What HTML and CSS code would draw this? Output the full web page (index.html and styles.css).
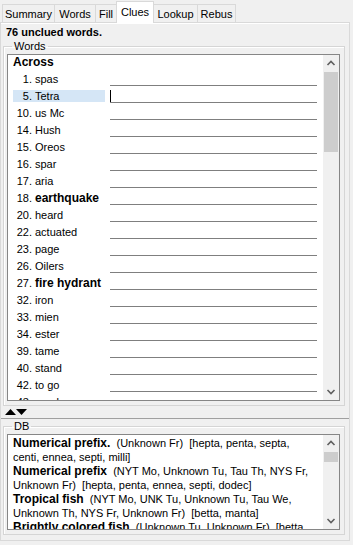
FILE: index.html
```html
<!DOCTYPE html>
<html lang="en">
<head>
  <meta charset="UTF-8">
  <meta name="viewport" content="width=device-width, initial-scale=1.0">
  <title>Clues</title>
  <link rel="stylesheet" href="styles.css">
</head>
<body>

  <!-- tab strip -->
  <div class="tabs">
    <div class="tab" style="width:53px">Summary</div>
    <div class="tab" style="width:42px">Words</div>
    <div class="tab" style="width:22px">Fill</div>
    <div class="tab active" style="width:38px">Clues</div>
    <div class="tab" style="width:45px">Lookup</div>
    <div class="tab" style="width:39px">Rebus</div>
  </div>

  <div class="panel">
    <div class="summary">76 unclued words.</div>

    <fieldset class="group">
      <legend>Words</legend>
      <div class="listbox words">
        <div class="list-body">
          <div class="heading">Across</div>
          <div class="row"><span class="label"><span class="num">1.</span>spas</span><span class="entry"></span></div>
          <div class="row"><span class="label selected"><span class="num">5.</span>Tetra</span><span class="entry focus"><span class="caret"></span></span></div>
          <div class="row"><span class="label"><span class="num">10.</span>us Mc</span><span class="entry"></span></div>
          <div class="row"><span class="label"><span class="num">14.</span>Hush</span><span class="entry"></span></div>
          <div class="row"><span class="label"><span class="num">15.</span>Oreos</span><span class="entry"></span></div>
          <div class="row"><span class="label"><span class="num">16.</span>spar</span><span class="entry"></span></div>
          <div class="row"><span class="label"><span class="num">17.</span>aria</span><span class="entry"></span></div>
          <div class="row"><span class="label long"><span class="num">18.</span>earthquake</span><span class="entry"></span></div>
          <div class="row"><span class="label"><span class="num">20.</span>heard</span><span class="entry"></span></div>
          <div class="row"><span class="label"><span class="num">22.</span>actuated</span><span class="entry"></span></div>
          <div class="row"><span class="label"><span class="num">23.</span>page</span><span class="entry"></span></div>
          <div class="row"><span class="label"><span class="num">26.</span>Oilers</span><span class="entry"></span></div>
          <div class="row"><span class="label long"><span class="num">27.</span>fire hydrant</span><span class="entry"></span></div>
          <div class="row"><span class="label"><span class="num">32.</span>iron</span><span class="entry"></span></div>
          <div class="row"><span class="label"><span class="num">33.</span>mien</span><span class="entry"></span></div>
          <div class="row"><span class="label"><span class="num">34.</span>ester</span><span class="entry"></span></div>
          <div class="row"><span class="label"><span class="num">39.</span>tame</span><span class="entry"></span></div>
          <div class="row"><span class="label"><span class="num">40.</span>stand</span><span class="entry"></span></div>
          <div class="row"><span class="label"><span class="num">42.</span>to go</span><span class="entry"></span></div>
          <div class="row"><span class="label"><span class="num">43.</span>snarl</span><span class="entry"></span></div>
        </div>
        <div class="scrollbar">
          <svg class="arrow" width="16" height="16" viewBox="0 0 16 16"><polyline points="4.5,10 8,6.5 11.5,10" fill="none" stroke="#606060" stroke-width="1.6"/></svg>
          <div class="track"><div class="thumb" style="height:80px"></div></div>
          <svg class="arrow" width="16" height="16" viewBox="0 0 16 16"><polyline points="4.5,6 8,9.5 11.5,6" fill="none" stroke="#606060" stroke-width="1.6"/></svg>
        </div>
      </div>
    </fieldset>

    <!-- splitter -->
    <div class="splitter">
      <svg width="24" height="7" viewBox="0 0 24 7">
        <polygon points="0,6 5.5,0 11,6" fill="#000"/>
        <polygon points="11,0 22,0 16.5,6" fill="#000"/>
      </svg>
    </div>

    <fieldset class="group db">
      <legend>DB</legend>
      <div class="listbox dbbox">
        <div class="db-text">
          <p><b>Numerical prefix.</b>&nbsp; (Unknown Fr)&nbsp; [hepta, penta, septa, centi, ennea, septi, milli]</p>
          <p><b>Numerical prefix</b>&nbsp; (NYT Mo, Unknown Tu, Tau Th, NYS Fr, Unknown Fr)&nbsp; [hepta, penta, ennea, septi, dodec]</p>
          <p><b>Tropical fish</b>&nbsp; (NYT Mo, UNK Tu, Unknown Tu, Tau We, Unknown Th, NYS Fr, Unknown Fr)&nbsp; [betta, manta]</p>
          <p><b>Brightly colored fish</b>&nbsp; (Unknown Tu, Unknown Fr)&nbsp; [betta, manta]</p>
        </div>
        <div class="scrollbar">
          <svg class="arrow" width="16" height="16" viewBox="0 0 16 16"><polyline points="4.5,10 8,6.5 11.5,10" fill="none" stroke="#606060" stroke-width="1.6"/></svg>
          <div class="track"><div class="thumb" style="height:10px"></div></div>
          <svg class="arrow" width="16" height="16" viewBox="0 0 16 16"><polyline points="4.5,6 8,9.5 11.5,6" fill="none" stroke="#606060" stroke-width="1.6"/></svg>
        </div>
      </div>
    </fieldset>
  </div>

</body>
</html>
```

FILE: styles.css
```css
body {
  margin: 0;
  width: 353px;
  height: 545px;
  overflow: hidden;
  background-color: #f0f0f0;
  font-family: "Liberation Sans", Arial, sans-serif;
  font-size: 11px;
  color: #000;
}
.tabs {
  display: flex;
  align-items: flex-end;
  height: 22px;
  padding-left: 2px;
  position: relative;
  z-index: 1;
}
.tab {
  box-sizing: border-box;
  height: 18px;
  line-height: 18px;
  text-align: center;
  border: 1px solid #d9d9d9;
  border-bottom: none;
  margin-right: -1px;
  background-color: #f0f0f0;
  white-space: nowrap;
}
.tab.active {
  height: 22px;
  margin-bottom: -1px;
  line-height: 20px;
  background-color: #ffffff;
  border-color: #d9d9d9;
}
.panel {
  box-sizing: border-box;
  width: 350px;
  height: 519px;
  border: 1px solid #d9d9d9;
  box-shadow: inset 0 1px 0 #ffffff;
  background-color: #f0f0f0;
  padding-top: 3px;
}
.summary {
  font-weight: bold;
  line-height: 13px;
  padding-left: 5px;
}
.group {
  margin: 0 4px 0 2px;
  padding: 1px 4px 4px 3px;
  border: 1px solid #d5d5d5;
  box-shadow: inset 1px 1px 0 #ffffff;
}
.group legend {
  padding: 0 2px;
  margin-left: 5px;
  line-height: 14px;
}
.listbox {
  display: flex;
  border: 1px solid #868686;
  background-color: #ffffff;
}
.words {
  height: 345px;
}
.list-body {
  flex: 1;
  overflow: hidden;
}
.heading {
  box-sizing: border-box;
  height: 17px;
  padding-top: 1px;
  line-height: 13px;
  padding-left: 5px;
  font-size: 12px;
  font-weight: bold;
}
.row {
  display: flex;
  box-sizing: border-box;
  height: 17px;
  padding-top: 1px;
}
.label {
  display: flex;
  width: 92px;
  height: 12px;
  line-height: 13px;
  margin-left: 5px;
  white-space: nowrap;
}
.label.long {
  font-size: 12px;
  font-weight: bold;
}
.label.long .num {
  font-size: 11px;
  font-weight: normal;
}
.label.selected {
  background-color: #d5e6f6;
}
.num {
  width: 19px;
  margin-right: 3px;
  text-align: right;
}
.entry {
  display: block;
  width: 207px;
  height: 12px;
  margin-left: 5px;
  border-bottom: 1px solid #7f7f7f;
}
.caret {
  display: block;
  width: 1px;
  height: 12px;
  background-color: #000;
}
.scrollbar {
  display: flex;
  flex-direction: column;
  width: 16px;
  background-color: #f0f0f0;
}
.arrow {
  display: block;
  flex: none;
}
.track {
  flex: 1;
}
.thumb {
  margin: 1px 1px 0 1px;
  background-color: #cdcdcd;
}
.splitter {
  height: 13px;
  padding: 3px 0 0 4px;
  box-sizing: border-box;
  border-bottom: 1px solid #a0a0a0;
}
.splitter svg {
  display: block;
}
.db {
  margin-top: 0;
  padding-top: 1px;
}
.dbbox {
  height: 94px;
}
.db-text {
  flex: 1;
  overflow: hidden;
  padding: 1px 8px 0 5px;
  line-height: 14px;
}
.db-text p {
  margin: 0;
}
.db-text b {
  font-size: 12px;
}
```
